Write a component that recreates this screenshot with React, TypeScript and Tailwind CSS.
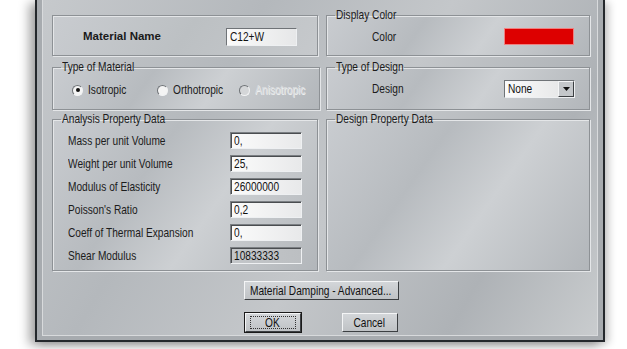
import type { ReactNode } from 'react'

const font = 'font-["Liberation_Sans",Arial,sans-serif]'

// narrow text: the dialog font is condensed, Liberation Sans is squeezed to match
function N({ children, center }: { children: ReactNode; center?: boolean }) {
  return (
    <span className={`inline-block whitespace-nowrap scale-x-[0.78] ${center ? 'origin-center' : 'origin-left'}`}>
      {children}
    </span>
  )
}

function Group({ title, w, className, children }: { title: string; w: string; className: string; children?: ReactNode }) {
  return (
    <fieldset
      className={`border border-[#8d9195] shadow-[inset_1px_1px_0_#e4e6e8,1px_1px_0_#e4e6e8] bg-[linear-gradient(125deg,#c9ccd0_0%,#b7bbbf_35%,#cdd0d3_60%,#b2b6ba_100%)] ${className}`}
    >
      <legend className={`ml-[8px] px-[1px] text-[13px] leading-[14px] text-[#1c1c1c] overflow-visible ${w}`}>
        <N>{title}</N>
      </legend>
      {children}
    </fieldset>
  )
}

function TextBox({ value, disabled }: { value: string; disabled?: boolean }) {
  return (
    <div
      className={`w-[72px] h-[17px] border-t border-l border-[#7b7f83] border-b border-r border-b-[#eef0f2] border-r-[#eef0f2] shadow-[inset_1px_1px_0_#4a4d50] pl-[3px] text-[13px] leading-[15px] text-[#111] ${
        disabled
          ? 'bg-[linear-gradient(90deg,#c3c6c9,#bcbfc2)]'
          : 'bg-[linear-gradient(90deg,#fbfbfb,#e8e9ea)]'
      }`}
    >
      <N>{value}</N>
    </div>
  )
}

function Radio({ label, checked, disabled }: { label: string; checked?: boolean; disabled?: boolean }) {
  return (
    <div className="flex items-center gap-[5px]">
      <span
        className={`w-[11px] h-[11px] rounded-full flex items-center justify-center border border-t-[#6f7377] border-l-[#6f7377] border-b-[#f2f3f4] border-r-[#f2f3f4] ${
          disabled ? 'bg-[#d4d6d8]' : 'bg-[#f4f4f4]'
        }`}
      >
        {checked && <span className="w-[4px] h-[4px] rounded-full bg-[#111]" />}
      </span>
      <span
        className={`text-[13px] leading-[14px] ${
          disabled ? 'text-[#dcdee0] [text-shadow:1px_1px_0_#eef0f1]' : 'text-[#1c1c1c]'
        }`}
      >
        <N>{label}</N>
      </span>
    </div>
  )
}

function Button({ label, className, focused }: { label: string; className: string; focused?: boolean }) {
  return (
    <div
      className={`h-[19px] flex items-center justify-center text-[13px] leading-[14px] text-[#111] bg-[linear-gradient(180deg,#d3d6d9,#bfc2c5)] border border-t-[#f4f5f6] border-l-[#f4f5f6] border-b-[#3c3f42] border-r-[#3c3f42] ${
        focused ? 'outline outline-1 outline-[#1a1a1a]' : ''
      } ${className}`}
    >
      {focused ? (
        <span className="w-[46px] h-[13px] flex items-center justify-center border border-dotted border-[#333]">
          <N center>{label}</N>
        </span>
      ) : (
        <N center>{label}</N>
      )}
    </div>
  )
}

const rows = [
  { label: 'Mass per unit Volume', value: '0,' },
  { label: 'Weight per unit Volume', value: '25,' },
  { label: 'Modulus of Elasticity', value: '26000000' },
  { label: "Poisson's Ratio", value: '0,2' },
  { label: 'Coeff of Thermal Expansion', value: '0,' },
  { label: 'Shear Modulus', value: '10833333', disabled: true },
]

export default function App() {
  return (
    <div className={`w-[627px] h-[349px] bg-white flex overflow-hidden ${font}`}>
      <div className="ml-[35px] w-[570px] h-[342px] border-x-2 border-b-2 border-[#24282c] shadow-[-6px_3px_10px_rgba(0,0,0,0.35),4px_2px_8px_rgba(0,0,0,0.2)] bg-[#a7abaf] px-[5px] pb-[4px] flex">
        <div className="flex-1 flex flex-col border-x border-b border-[#d8dadc] bg-[linear-gradient(120deg,#c6c9cc_0%,#b4b8bc_30%,#c4c7ca_55%,#aeb2b6_80%,#c9ccce_100%)] pl-[9px] pr-[7px] pt-[8px]">
          <div className="flex gap-[8px]">
            <div className="w-[266px] flex flex-col">
              <div className="mt-[7px] h-[41px] border border-[#8d9195] shadow-[inset_1px_1px_0_#e4e6e8,1px_1px_0_#e4e6e8] bg-[linear-gradient(125deg,#c9ccd0_0%,#bcc0c3_50%,#c6c9cc_100%)] flex items-center pl-[30px] pr-[20px] pt-[3px]">
                <span className="text-[11.5px] font-bold text-[#1a1a1a]">Material Name</span>
                <div className="ml-auto w-[71px] h-[18px] border border-t-[#6f7377] border-l-[#6f7377] border-b-[#eef0f2] border-r-[#eef0f2] bg-[linear-gradient(90deg,#fbfbfb,#e6e7e8)] pl-[3px] text-[13px] leading-[16px] text-[#111]">
                  <N>C12+W</N>
                </div>
              </div>
              <Group title="Type of Material" w="w-[73px]" className="mt-[4px] h-[50px]">
                <div className="flex items-center pl-[19px] pt-[9px]">
                  <div className="w-[85px]">
                    <Radio label="Isotropic" checked />
                  </div>
                  <div className="w-[82px]">
                    <Radio label="Orthotropic" />
                  </div>
                  <Radio label="Anisotropic" disabled />
                </div>
              </Group>
              <Group title="Analysis Property Data" w="w-[102px]" className="mt-[2px] h-[159px]">
                <div className="flex flex-col gap-[6px] pt-[6px] pl-[15px] pr-[15px]">
                  {rows.map((r) => (
                    <div key={r.label} className="flex items-center justify-between h-[17px]">
                      <span className="text-[13px] leading-[14px] text-[#1c1c1c]">
                        <N>{r.label}</N>
                      </span>
                      <TextBox value={r.value} disabled={r.disabled} />
                    </div>
                  ))}
                </div>
              </Group>
            </div>
            <div className="w-[264px] flex flex-col">
              <Group title="Display Color" w="w-[58px]" className="h-[48px]">
                <div className="flex items-center pl-[45px] pr-[15px] pt-[6px]">
                  <span className="text-[13px] leading-[14px] text-[#1c1c1c]">
                    <N>Color</N>
                  </span>
                  <div className="ml-auto w-[70px] h-[17px] bg-[#dd0000] border border-[#f08080]" />
                </div>
              </Group>
              <Group title="Type of Design" w="w-[69px]" className="mt-[4px] h-[50px]">
                <div className="flex items-center pl-[45px] pr-[14px] pt-[6px]">
                  <span className="text-[13px] leading-[14px] text-[#1c1c1c]">
                    <N>Design</N>
                  </span>
                  <div className="ml-auto w-[71px] h-[18px] flex border border-t-[#6f7377] border-l-[#6f7377] border-b-[#eef0f2] border-r-[#eef0f2] bg-[linear-gradient(90deg,#fbfbfb,#e2e3e4)]">
                    <span className="flex-1 pl-[3px] text-[13px] leading-[16px] text-[#111]">
                      <N>None</N>
                    </span>
                    <span className="w-[16px] h-[16px] flex items-center justify-center bg-[#c4c7ca] border border-t-[#f4f5f6] border-l-[#f4f5f6] border-b-[#3c3f42] border-r-[#3c3f42]">
                      <svg width="7" height="4" viewBox="0 0 7 4">
                        <path d="M0 0h7L3.5 4z" fill="#111" />
                      </svg>
                    </span>
                  </div>
                </div>
              </Group>
              <Group title="Design Property Data" w="w-[97px]" className="mt-[2px] h-[159px]" />
            </div>
          </div>
          <div className="flex justify-center mt-[10px]">
            <Button label="Material Damping - Advanced..." className="w-[155px]" />
          </div>
          <div className="flex justify-center gap-[41px] mt-[13px]">
            <Button label="OK" className="w-[56px]" focused />
            <Button label="Cancel" className="w-[56px]" />
          </div>
        </div>
      </div>
    </div>
  )
}
